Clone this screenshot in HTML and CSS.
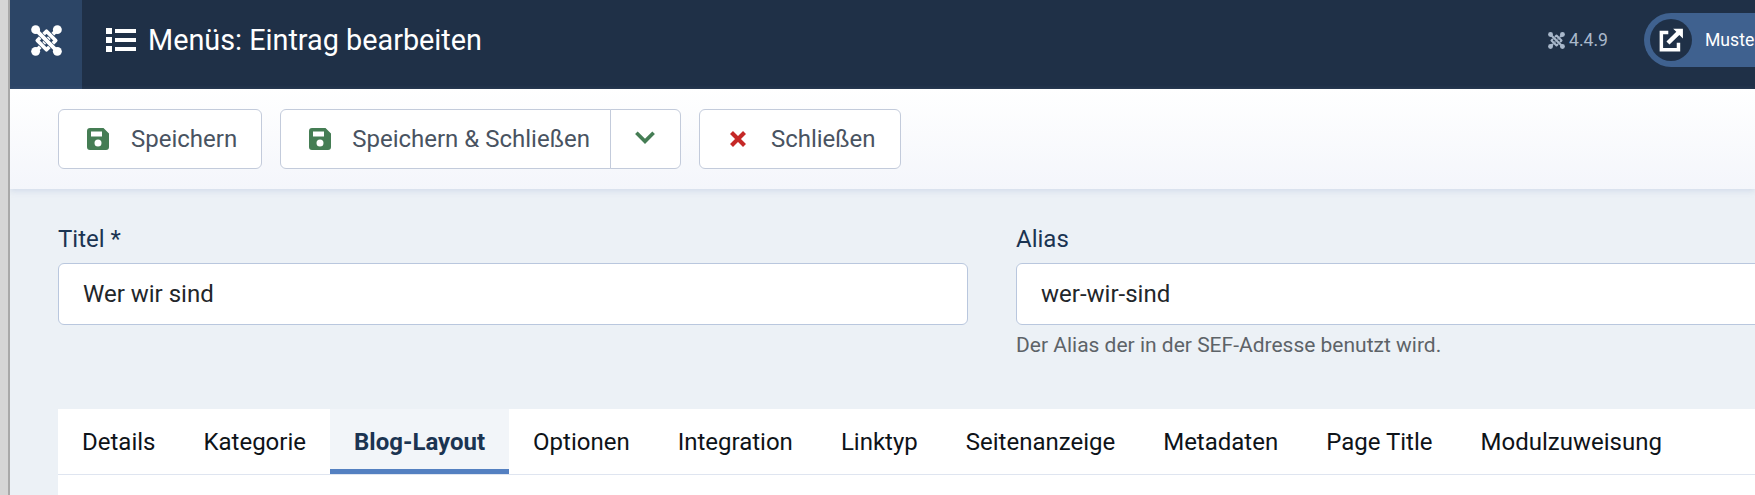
FILE: index.html
```html
<!DOCTYPE html>
<html lang="de">
<head>
<meta charset="utf-8">
<title>Menüs: Eintrag bearbeiten</title>
<link rel="stylesheet" href="styles.css">
</head>
<body>
<div class="edge"></div>
<div class="main">
  <header class="header">
    <div class="logo">
      <svg class="logo-svg" viewBox="0 0 32 32"><use href="#jm"/></svg>
    </div>
    <svg class="list-icon" viewBox="0 0 30 24"><path d="M0 0h6v6H0zM0 9h6v6H0zM0 18h6v6H0zM9 1h21v4H9zM9 10h21v4H9zM9 19h21v4H9z"/></svg>
    <h1 class="title">Menüs: Eintrag bearbeiten</h1>
    <div class="version">
      <svg class="ver-svg" viewBox="0 0 32 32"><use href="#jm"/></svg>
      <span>4.4.9</span>
    </div>
    <div class="user">
      <span class="user-circle">
        <svg class="ext-icon" viewBox="0 0 24 24"><path d="M9.5 3.5H1.5V22.5H20.5V14.5H17.3V19.3H4.7V6.7H9.5Z"/><path d="M14 1.5H23V10.5L19.7 7.3L10.6 16.2L7.8 13.4L16.9 4.4Z"/></svg>
      </span>
      <span class="user-name">Muster Website</span>
    </div>
  </header>

  <div class="toolbar">
    <button class="btn btn-save" type="button">
      <svg class="btn-icon save" viewBox="0 0 22 22"><path d="M3 0H16.5L22 5.5V19a3 3 0 0 1-3 3H3a3 3 0 0 1-3-3V3a3 3 0 0 1 3-3ZM4 3.5V8.5H15V3.5ZM11 11.5a3.5 3.5 0 1 0 0 7 3.5 3.5 0 0 0 0-7Z" fill-rule="evenodd"/></svg>
      <span>Speichern</span>
    </button>
    <div class="btn-group">
      <button class="btn btn-main" type="button">
        <svg class="btn-icon save" viewBox="0 0 22 22"><path d="M3 0H16.5L22 5.5V19a3 3 0 0 1-3 3H3a3 3 0 0 1-3-3V3a3 3 0 0 1 3-3ZM4 3.5V8.5H15V3.5ZM11 11.5a3.5 3.5 0 1 0 0 7 3.5 3.5 0 0 0 0-7Z" fill-rule="evenodd"/></svg>
        <span>Speichern &amp; Schließen</span>
      </button>
      <button class="btn-toggle" type="button" aria-label="Mehr">
        <svg class="chev" viewBox="0 0 20 13"><path d="M2 2.5l8 8 8-8" fill="none" stroke="currentColor" stroke-width="3.4"/></svg>
      </button>
    </div>
    <button class="btn btn-close" type="button">
      <svg class="btn-icon close" viewBox="0 0 18 18"><path d="M2.5 2.5l13 13M15.5 2.5l-13 13" fill="none" stroke="currentColor" stroke-width="4.2"/></svg>
      <span>Schließen</span>
    </button>
  </div>

  <form class="form">
    <div class="fields">
      <div class="field">
        <label class="label" for="t">Titel *</label>
        <input class="input" id="t" value="Wer wir sind">
      </div>
      <div class="field">
        <label class="label" for="a">Alias</label>
        <input class="input" id="a" value="wer-wir-sind">
        <div class="hint">Der Alias der in der SEF-Adresse benutzt wird.</div>
      </div>
    </div>
    <nav class="tabs">
      <a class="tab">Details</a>
      <a class="tab">Kategorie</a>
      <a class="tab active">Blog-Layout</a>
      <a class="tab">Optionen</a>
      <a class="tab">Integration</a>
      <a class="tab">Linktyp</a>
      <a class="tab">Seitenanzeige</a>
      <a class="tab">Metadaten</a>
      <a class="tab">Page Title</a>
      <a class="tab">Modulzuweisung</a>
    </nav>
    <div class="panel"></div>
  </form>
</div>
<svg class="defs" width="0" height="0">
  <defs>
    <g id="jm" fill="none" stroke-linejoin="round">
      <path d="M5 27L27 5" stroke="currentColor" stroke-width="4"/>
      <path class="hook-gap" d="M16 6.5L25.5 16L16 25.5L6.5 16Z" stroke-width="5.2"/>
      <path d="M16 6.5L25.5 16L16 25.5L6.5 16Z" stroke="currentColor" stroke-width="3.8"/>
      <path class="hook-gap" d="M8 8L24 24" stroke-width="5.2"/>
      <path d="M5 5L27 27" stroke="currentColor" stroke-width="4"/>
      <g fill="currentColor">
        <circle cx="4.8" cy="4.8" r="4.6"/>
        <circle cx="27.2" cy="4.8" r="4.6"/>
        <circle cx="4.8" cy="27.2" r="4.6"/>
        <circle cx="27.2" cy="27.2" r="4.6"/>
      </g>
    </g>
  </defs>
</svg>
</body>
</html>
```
FILE: styles.css
```css
* { box-sizing: border-box; }
html, body { height: 100%; }
body {
  margin: 0;
  display: flex;
  overflow: hidden;
  background: #ecf1f6;
  font-family: Roboto, "Liberation Sans", sans-serif;
}
.edge {
  flex: 0 0 10px;
  background: linear-gradient(90deg, #d6d6d6 0 8px, #a9a9a9 8px 10px);
}
.main { flex: 1; min-width: 0; overflow: hidden; }
.defs { position: absolute; }
.hook-gap { stroke: var(--gap); }

.header {
  height: 89px;
  padding-bottom: 9px;
  display: flex;
  align-items: center;
  background: #1f3047;
  color: #fff;
}
.logo {
  flex: 0 0 72px;
  height: 89px;
  padding-bottom: 9px;
  align-self: flex-start;
  background: #2c4566;
  display: flex;
  align-items: center;
  justify-content: center;
  color: #fff;
  --gap: #2c4566;
}
.logo-svg { width: 31px; height: 31px; }
.list-icon { width: 30px; height: 24px; fill: #fff; margin-left: 24px; flex: none; }
.title {
  margin: 0 0 0 12px;
  font-size: 28.8px;
  font-weight: 400;
  line-height: 1;
  white-space: nowrap;
}
.version {
  margin-left: auto;
  display: flex;
  align-items: center;
  gap: 4px;
  color: #a9b8cb;
  font-size: 17.6px;
  --gap: #1f3047;
}
.ver-svg { width: 17px; height: 17px; color: #a9b8cb; }
.user {
  margin-left: 36px;
  margin-right: -89px;
  width: 200px;
  height: 54px;
  flex: none;
  background: #3f618f;
  border-radius: 27px 0 0 27px;
  display: flex;
  align-items: center;
  padding-left: 6px;
  overflow: hidden;
}
.user-circle {
  width: 42px;
  height: 42px;
  border-radius: 50%;
  background: #1f3047;
  display: flex;
  align-items: center;
  justify-content: center;
  flex: none;
}
.ext-icon { width: 26px; height: 26px; fill: #fff; }
.user-name { margin-left: 13px; font-size: 17.6px; white-space: nowrap; }

.toolbar {
  height: 100px;
  padding: 20px 48px 0;
  display: flex;
  align-items: flex-start;
  gap: 18px;
  background: linear-gradient(180deg, #fff 0%, #f4f6fb 100%);
  box-shadow: 0 2px 6px rgba(150, 170, 205, .3);
  position: relative;
}
.btn {
  height: 60px;
  display: flex;
  align-items: center;
  background: #fff;
  border: 1px solid #c3cbdb;
  border-radius: 6px;
  font: 400 24px Roboto, sans-serif;
  color: #495361;
  cursor: pointer;
}
.btn span { white-space: nowrap; }
.btn-save { padding: 0 24px 0 28px; }
.btn-icon { width: 22px; height: 22px; flex: none; margin-right: 21px; }
.btn-save .btn-icon { margin-right: 22px; }
.save { fill: #457d54; }
.btn-close { padding: 0 24px 0 29px; }
.close { color: #c52827; width: 18px; height: 18px; margin: 0 24px 0 0; }
.btn-group { display: flex; }
.btn-main { border-radius: 6px 0 0 6px; padding: 0 20px 0 28px; }
.btn-toggle {
  width: 71px;
  height: 60px;
  margin-left: -1px;
  background: #fff;
  border: 1px solid #c3cbdb;
  border-radius: 0 6px 6px 0;
  display: flex;
  align-items: center;
  justify-content: center;
  color: #457d54;
  padding: 0 0 4px;
}
.chev { width: 22px; height: 14px; }

.form { padding: 0 0 0 48px; }
.fields {
  display: grid;
  grid-template-columns: 910px 910px;
  column-gap: 48px;
  padding-top: 37px;
  height: 220px;
}
.field { display: flex; flex-direction: column; align-items: stretch; }
.label {
  font-size: 24px;
  line-height: 26px;
  color: #1b3452;
  margin-bottom: 11px;
}
.input {
  height: 62px;
  padding: 0 24px;
  background: #fff;
  border: 1px solid #b9c7de;
  border-radius: 6px;
  font: 400 24px Roboto, sans-serif;
  color: #22262a;
}
.hint { margin-top: 6px; font-size: 21px; line-height: 28px; color: #5d6368; }

.tabs {
  display: flex;
  height: 66px;
  background: #fff;
  border-bottom: 1px solid #dfe5f0;
}
.tab {
  height: 65px;
  padding: 0 24px;
  display: flex;
  align-items: center;
  font-size: 24px;
  color: #0e1318;
  white-space: nowrap;
}
.tab.active {
  background: #f2f5f9;
  color: #1b3452;
  font-weight: 700;
  border-bottom: 5px solid #5480c1;
  padding-top: 5px;
}
.panel { height: 40px; background: #fff; }
```
